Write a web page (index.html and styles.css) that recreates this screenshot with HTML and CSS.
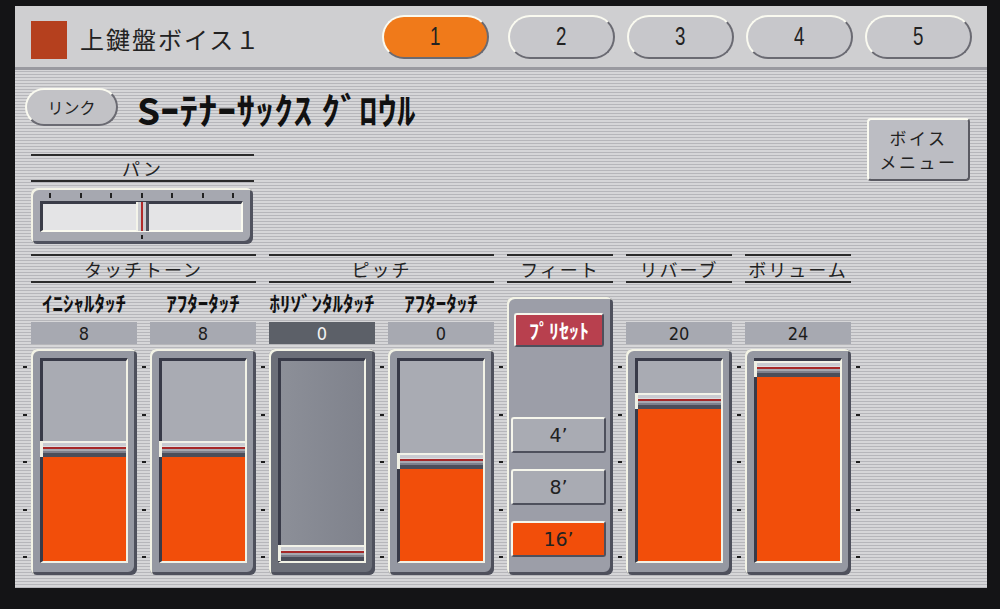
FILE: index.html
```html
<!DOCTYPE html>
<html lang="ja">
<head>
<meta charset="utf-8">
<title>上鍵盤ボイス１</title>
<link rel="stylesheet" href="styles.css">
</head>
<body>
<div class="screen">
  <header class="hdr">
    <div class="hdr-square"></div>
    <div class="hdr-title">上鍵盤ボイス１</div>
    <nav class="tabs">
      <div class="tab active"><span>1</span></div>
      <div class="tab"><span>2</span></div>
      <div class="tab"><span>3</span></div>
      <div class="tab"><span>4</span></div>
      <div class="tab"><span>5</span></div>
    </nav>
  </header>
  <main class="content">
    <div class="top">
      <div class="top-left">
        <div class="link-row">
          <div class="link-btn">リンク</div>
          <div class="voice-name">Sｰﾃﾅｰｻｯｸｽ ｸﾞﾛｳﾙ</div>
        </div>
        <div class="pan">
          <div class="pan-head">パン</div>
          <div class="pan-box">
            <div class="pan-ticks"><i></i><i></i><i></i><i></i><i></i><i></i><i></i></div>
            <div class="pan-track"><div class="pan-knob"></div></div>
            <div class="pan-bottom"><i></i></div>
          </div>
        </div>
      </div>
      <div class="voice-menu"><span>ボイス</span><span>メニュー</span></div>
    </div>

    <div class="sections">
      <div class="sec-head c2-4">タッチトーン</div>
      <div class="sec-head c6-8">ピッチ</div>
      <div class="sec-head c10">フィート</div>
      <div class="sec-head c12">リバーブ</div>
      <div class="sec-head c14">ボリューム</div>

      <div class="sub c2">ｲﾆｼｬﾙﾀｯﾁ</div>
      <div class="sub c4">ｱﾌﾀｰﾀｯﾁ</div>
      <div class="sub c6">ﾎﾘｿﾞﾝﾀﾙﾀｯﾁ</div>
      <div class="sub c8">ｱﾌﾀｰﾀｯﾁ</div>

      <div class="val c2">8</div>
      <div class="val c4">8</div>
      <div class="val c6 selected">0</div>
      <div class="val c8">0</div>
      <div class="val c12">20</div>
      <div class="val c14">24</div>

      <div class="ticks c1"><i></i><i></i><i></i><i></i><i></i></div>
      <div class="slider c2"><div class="well"><div class="empty"></div><div class="knob"></div><div class="fill" style="height:104px"></div></div></div>
      <div class="ticks c3"><i></i><i></i><i></i><i></i><i></i></div>
      <div class="slider c4"><div class="well"><div class="empty"></div><div class="knob"></div><div class="fill" style="height:104px"></div></div></div>
      <div class="ticks c5"><i></i><i></i><i></i><i></i><i></i></div>
      <div class="slider c6 dark"><div class="well"><div class="empty"></div><div class="knob"></div><div class="fill" style="height:0px"></div></div></div>
      <div class="ticks c7"><i></i><i></i><i></i><i></i><i></i></div>
      <div class="slider c8"><div class="well"><div class="empty"></div><div class="knob"></div><div class="fill" style="height:92px"></div></div></div>
      <div class="ticks c9"><i></i><i></i><i></i><i></i><i></i></div>

      <div class="feet c10">
        <div class="fbtn preset">ﾌﾟﾘｾｯﾄ</div>
        <div class="feet-space"></div>
        <div class="fbtn">4’</div>
        <div class="fbtn">8’</div>
        <div class="fbtn on">16’</div>
      </div>

      <div class="ticks c11"><i></i><i></i><i></i><i></i><i></i></div>
      <div class="slider c12"><div class="well"><div class="empty"></div><div class="knob"></div><div class="fill" style="height:152px"></div></div></div>
      <div class="ticks c13"><i></i><i></i><i></i><i></i><i></i></div>
      <div class="slider c14"><div class="well"><div class="empty"></div><div class="knob"></div><div class="fill" style="height:184px"></div></div></div>
      <div class="ticks c15"><i></i><i></i><i></i><i></i><i></i></div>
    </div>
  </main>
</div>
</body>
</html>
```

FILE: styles.css
```css
* { box-sizing: border-box; }

html, body {
  margin: 0;
  background: #141416;
}

body {
  width: 1000px;
  height: 609px;
  overflow: hidden;
  padding: 6px 0 0 15px;
  font-family: "Noto Sans CJK JP", "Noto Sans", sans-serif;
  color: #222;
}

.screen {
  width: 972px;
  height: 582px;
  display: flex;
  flex-direction: column;
  overflow: hidden;
  background: repeating-linear-gradient(to bottom, #d6d6d8 0 2px, #b6b6ba 2px 3px);
}

/* ---------- header ---------- */
.hdr {
  height: 64px;
  flex: none;
  display: flex;
  align-items: center;
  padding: 0 15px 0 16px;
  background: #cfcfd1;
  border-bottom: 3px solid #9a9aa0;
}

.hdr-square {
  width: 36px;
  height: 38px;
  margin-top: 6px;
  background: #b5401e;
}

.hdr-title {
  margin-left: 13px;
  margin-top: 5px;
  font-size: 24px;
  letter-spacing: 2px;
  line-height: 1;
  color: #222;
}

.tabs {
  margin-left: auto;
  display: flex;
  gap: 12px;
}

.tab {
  width: 107px;
  height: 44px;
  border-radius: 22px;
  display: flex;
  align-items: center;
  justify-content: center;
  background: #c7c7cb;
  border: 2px solid;
  border-color: #fafaf0 #6a6a72 #6a6a72 #fafaf0;
  font-family: "Liberation Sans", sans-serif;
  font-size: 26px;
  color: #222;
}

.tab span {
  display: inline-block;
  transform: scaleX(0.72);
}

.tab.active {
  background: #f07a1a;
  margin-right: 7px;
}

/* ---------- content ---------- */
.content {
  flex: 1;
  display: flex;
  flex-direction: column;
}

.top {
  display: flex;
  padding-top: 18px;
}

.top-left {
  display: flex;
  flex-direction: column;
}

.link-row {
  display: flex;
  align-items: center;
  height: 38px;
  margin-left: 10px;
}

.link-btn {
  width: 93px;
  height: 38px;
  border-radius: 19px;
  display: flex;
  align-items: center;
  justify-content: center;
  background: #c2c2c6;
  border: 2px solid;
  border-color: #fafaf0 #6a6a72 #6a6a72 #fafaf0;
  font-size: 16px;
  color: #222;
}

.voice-name {
  margin-left: 19px;
  margin-top: 4px;
  font-size: 37px;
  font-weight: 700;
  letter-spacing: 0.5px;
  line-height: 1;
  color: #111;
  white-space: pre;
}

.voice-menu {
  margin-left: auto;
  margin-right: 17px;
  margin-top: 30px;
  width: 103px;
  height: 63px;
  border-radius: 4px;
  background: #bcbdc3;
  border: 2px solid;
  border-color: #fafaf0 #5a5a62 #5a5a62 #fafaf0;
  display: flex;
  flex-direction: column;
  align-items: center;
  justify-content: center;
  font-size: 17px;
  line-height: 24px;
  letter-spacing: 2.5px;
  color: #222;
}

/* ---------- pan ---------- */
.pan {
  margin-left: 16px;
  margin-top: 28px;
  width: 223px;
}

.pan-head {
  height: 28px;
  border-top: 2px solid #2a2a2a;
  border-bottom: 2px solid #2a2a2a;
  text-align: center;
  font-size: 18px;
  line-height: 24px;
  letter-spacing: 2px;
}

.pan-box {
  margin-top: 6px;
  width: 222px;
  height: 56px;
  border-radius: 6px;
  background: #a6a8b0;
  box-shadow: inset 2px 2px 0 #f3f3e6, inset -3px -3px 0 #50525e;
  display: flex;
  flex-direction: column;
}

.pan-ticks {
  height: 13px;
  display: flex;
  justify-content: space-between;
  padding: 5px 19px 3px 18px;
}

.pan-ticks i, .pan-bottom i {
  display: block;
  width: 2px;
  height: 5px;
  background: #222;
}

.pan-track {
  height: 31px;
  margin: 0 10px 0 9px;
  display: flex;
  justify-content: center;
  background: #e4e4e6;
  border-style: solid;
  border-width: 3px 2px 2px 3px;
  border-color: #3a3c48 #fafaf0 #fafaf0 #3a3c48;
}

.pan-knob {
  width: 13px;
  margin: -2px 0 -1px;
  background: linear-gradient(to right, #f4f4ea 0 2px, #cacbd0 2px 5px, #b02a2a 5px 7px, #cacbd0 7px 10px, #4e505c 10px 13px);
}

.pan-bottom {
  display: flex;
  justify-content: center;
  padding: 3px 1px 0 0;
}

.pan-bottom i { height: 4px; }

/* ---------- sections ---------- */
.sections {
  margin: 10px 0 0 3px;
  display: grid;
  grid-template-columns: 13px 106px 13px 106px 13px 106px 13px 106px 13px 106px 13px 106px 13px 106px 13px;
  grid-template-rows: 29px 39px 22px 231px;
}

.c1 { grid-column: 1; }
.c2 { grid-column: 2; }
.c3 { grid-column: 3; }
.c4 { grid-column: 4; }
.c5 { grid-column: 5; }
.c6 { grid-column: 6; }
.c7 { grid-column: 7; }
.c8 { grid-column: 8; }
.c9 { grid-column: 9; }
.c10 { grid-column: 10; }
.c11 { grid-column: 11; }
.c12 { grid-column: 12; }
.c13 { grid-column: 13; }
.c14 { grid-column: 14; }
.c15 { grid-column: 15; }
.c2-4 { grid-column: 2 / 5; }
.c6-8 { grid-column: 6 / 9; }

.sec-head {
  grid-row: 1;
  border-top: 2px solid #2a2a2a;
  border-bottom: 2px solid #2a2a2a;
  display: flex;
  align-items: center;
  justify-content: center;
  font-size: 18px;
  letter-spacing: 2px;
  line-height: 1;
  color: #222;
}

.sub {
  grid-row: 2;
  display: flex;
  align-items: center;
  justify-content: center;
  font-size: 21px;
  font-weight: 700;
  line-height: 1;
  color: #111;
}

.val {
  grid-row: 3;
  background: #a7a9b1;
  display: flex;
  align-items: center;
  justify-content: center;
  font-family: "DejaVu Sans Condensed", "DejaVu Sans", sans-serif;
  font-size: 18px;
  color: #1c1c1c;
}

.val.selected {
  background: #5c6068;
  color: #f2f2f2;
}

.ticks {
  grid-row: 4;
  margin-top: 5px;
  padding-top: 17px;
  display: flex;
  flex-direction: column;
  align-items: center;
  gap: 45.5px;
}

.ticks i {
  display: block;
  width: 4px;
  height: 2px;
  background: #1e1e1e;
}

.slider {
  grid-row: 4;
  margin-top: 5px;
  height: 226px;
  border-radius: 6px;
  background: #9598a2;
  padding: 9px 9px 12px 9px;
  box-shadow: inset 2px 2px 0 #f3f3e6, inset -3px -3px 0 #4e505c;
}

.well {
  height: 100%;
  display: flex;
  flex-direction: column;
  background: #a9abb3;
  border-style: solid;
  border-width: 3px 2px 2px 3px;
  border-color: #383a48 #f2f2e6 #f2f2e6 #383a48;
}

.empty { flex: 1; }

.knob {
  flex: none;
  height: 16px;
  margin: 0 0 0 -3px;
  border-left: 3px solid #f0f0e4;
  background: linear-gradient(to bottom, #f2f2e8 0 2px, #c9cbd1 2px 5px, #dedee0 5px 6px, #a62828 6px 8px, #a6a8b0 8px 10px, #7e808c 10px 12px, #4c4e5a 12px 16px);
}

.fill {
  flex: none;
  background: #f24e0a;
}

.slider.dark {
  background: #6c6f79;
}

.slider.dark .well {
  background: linear-gradient(to right, #8c8f98, #7f828c);
}

/* ---------- feet ---------- */
.feet {
  grid-row: 2 / 5;
  margin-top: 14px;
  border-radius: 6px;
  background: #9c9ea8;
  box-shadow: inset 2px 2px 0 #f3f3e6, inset -3px -3px 0 #4e505c;
  padding: 16px 7px 18px 4px;
  display: flex;
  flex-direction: column;
  gap: 16px;
}

.feet-space { flex: 1; margin-top: -16px; }

.fbtn {
  flex: none;
  height: 36px;
  border-radius: 3px;
  background: #a9abb3;
  border: 2px solid;
  border-color: #f6f6ec #4e505c #4e505c #f6f6ec;
  display: flex;
  align-items: center;
  justify-content: center;
  font-family: "DejaVu Sans", sans-serif;
  font-size: 19px;
  color: #222;
}

.fbtn.preset {
  height: 34px;
  margin: 0 2px 0 3px;
  background: #b8404e;
  color: #fff;
  font-family: "Noto Sans CJK JP", sans-serif;
  font-weight: 700;
  font-size: 20px;
}

.fbtn.on {
  background: #f24e0a;
}
```
